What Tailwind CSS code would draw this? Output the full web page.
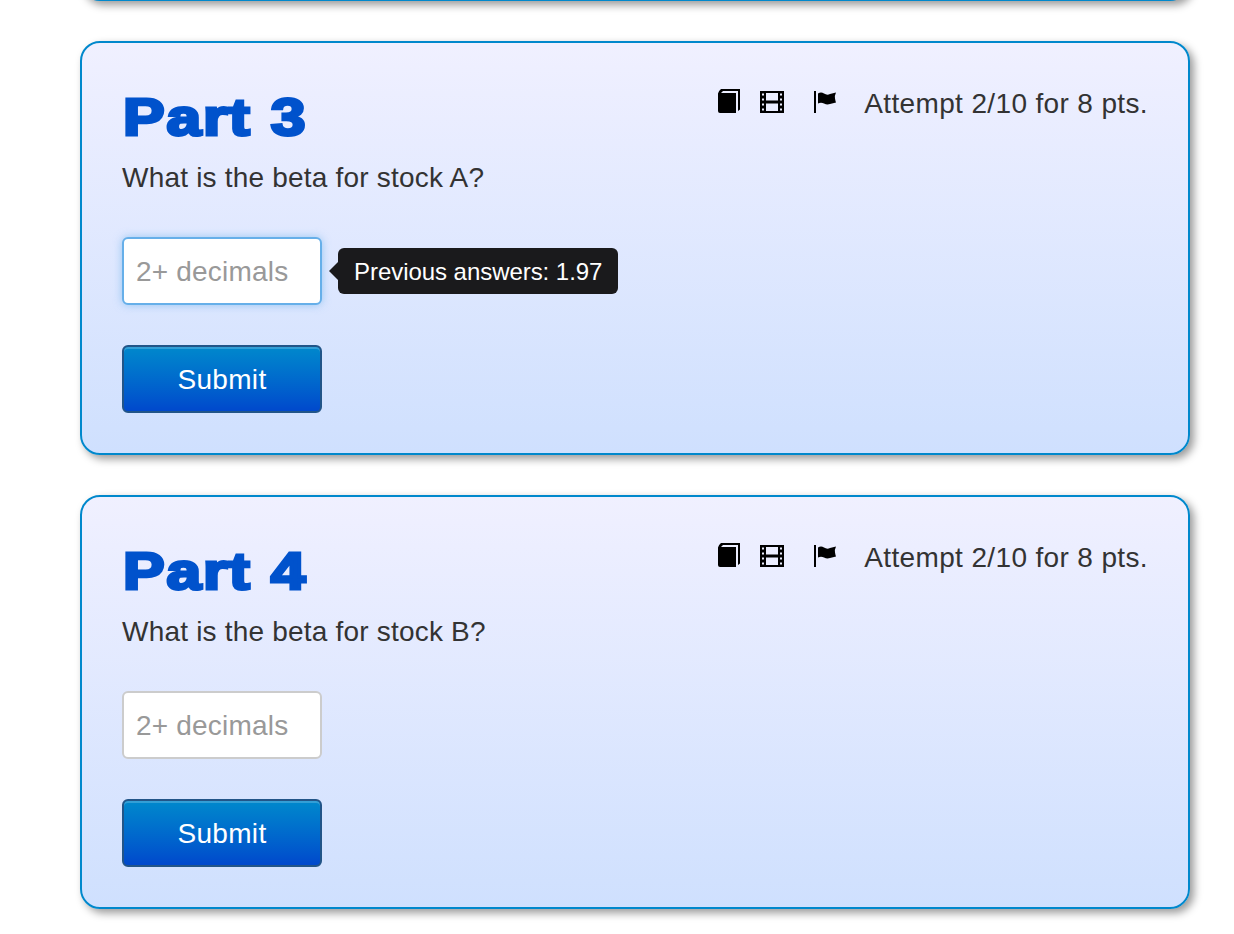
<!DOCTYPE html>
<html><head><meta charset="utf-8">
<script src="https://cdn.jsdelivr.net/npm/@tailwindcss/browser@4"></script>
</head>
<body class="bg-white font-['Liberation_Sans',Arial,sans-serif] text-[#333] overflow-hidden">
<div class="w-[1234px] h-[934px] pl-[80px] pr-[44px] flex flex-col overflow-hidden">
  <div class="h-[40px] -mt-[39px] shrink-0 rounded-[20px] border-2 border-[#0088cc] bg-[#cfe0fe] shadow-[4px_4px_8px_rgba(0,0,0,0.4)]"></div>

  <section class="mt-[40px] h-[414px] shrink-0 rounded-[20px] border-2 border-[#0088cc] bg-linear-to-b from-[#f0f0ff] to-[#cfe0fe] shadow-[4px_4px_8px_rgba(0,0,0,0.4)] px-[40px] pt-[40px] flex flex-col">
    <div class="flex justify-between items-start h-[64px]">
      <h2 class="ml-[1px] origin-left scale-x-[1.2] text-[52px] leading-[68px] font-bold text-[#0052cc] tracking-[1.5px] [-webkit-text-stroke:3px_#0052cc]">Part 3</h2>
      <div class="flex items-center mt-[5px] h-[32px]">
        <svg class="w-[22px] h-[24px] mb-[6px]" viewBox="0 0 22 24"><path fill="#000" d="M0 4.500Q0 2.500 3 0H22V20.500L20 22V2H5L3 4H18V24H2Q0 24 0 22Z"/></svg>
        <svg class="w-[24px] h-[22px] ml-[20px] mb-[4px]" viewBox="0 0 24 22"><path fill="#000" fill-rule="evenodd" d="M0 0h24v22H0zM2 2.500v2h2v-2zM2 7.500v2h2v-2zM2 12.500v2h2v-2zM2 17.500v2h2v-2zM20 2.500v2h2v-2zM20 7.500v2h2v-2zM20 12.500v2h2v-2zM20 17.500v2h2v-2zM6 2v7.500h12V2zM6 12.500V20h12v-7.500z"/></svg>
        <svg class="w-[22px] h-[22px] ml-[30px] mb-[4px]" viewBox="0 0 22 22"><path fill="#000" d="M0 0h2v22H0zM4 2.500q3-2 6 0t6 .5q3-1 6-1.500-1.500 3-1 6t1 4q-3 .5-6 1.500t-6-.5-6 0z"/></svg>
        <span class="ml-[28px] text-[28px] leading-[32px] tracking-[0.36px]">Attempt 2/10 for 8 pts.</span>
      </div>
    </div>
    <p class="mt-[11px] text-[28px] leading-[40px] tracking-[0.2px]">What is the beta for stock A?</p>
    <div class="mt-[39px] flex items-center">
      <input placeholder="2+ decimals" class="w-[200px] h-[68px] rounded-[6px] bg-white border-2 border-[#66afe9] px-[12px] pt-[2px] text-[28px] tracking-[0.2px] placeholder:text-[#999] shadow-[0_0_8px_rgba(102,175,233,0.6)] outline-none">
      <div class="relative ml-[16px] h-[46px] rounded-[6px] bg-[#1a1a1c] px-[16px] pt-[1px] flex items-center text-white text-[24px] leading-[30px] tracking-[-0.05px]">
        <span class="absolute left-[-9px] top-[14px] w-0 h-0 border-y-[9px] border-y-transparent border-r-[9px] border-r-[#1a1a1c]"></span>
        Previous answers: 1.97
      </div>
    </div>
    <button class="mt-[40px] w-[200px] h-[68px] rounded-[6px] border-2 border-[#225588] pt-[2px] bg-linear-to-b from-[#0088cc] to-[#0048cc] text-white text-[28px] tracking-[0.3px] shadow-[inset_0_2px_0_rgba(255,255,255,0.2)]">Submit</button>
  </section>

  <section class="mt-[40px] h-[414px] shrink-0 rounded-[20px] border-2 border-[#0088cc] bg-linear-to-b from-[#f0f0ff] to-[#cfe0fe] shadow-[4px_4px_8px_rgba(0,0,0,0.4)] px-[40px] pt-[40px] flex flex-col">
    <div class="flex justify-between items-start h-[64px]">
      <h2 class="ml-[1px] origin-left scale-x-[1.2] text-[52px] leading-[68px] font-bold text-[#0052cc] tracking-[1.5px] [-webkit-text-stroke:3px_#0052cc]">Part 4</h2>
      <div class="flex items-center mt-[5px] h-[32px]">
        <svg class="w-[22px] h-[24px] mb-[6px]" viewBox="0 0 22 24"><path fill="#000" d="M0 4.500Q0 2.500 3 0H22V20.500L20 22V2H5L3 4H18V24H2Q0 24 0 22Z"/></svg>
        <svg class="w-[24px] h-[22px] ml-[20px] mb-[4px]" viewBox="0 0 24 22"><path fill="#000" fill-rule="evenodd" d="M0 0h24v22H0zM2 2.500v2h2v-2zM2 7.500v2h2v-2zM2 12.500v2h2v-2zM2 17.500v2h2v-2zM20 2.500v2h2v-2zM20 7.500v2h2v-2zM20 12.500v2h2v-2zM20 17.500v2h2v-2zM6 2v7.500h12V2zM6 12.500V20h12v-7.500z"/></svg>
        <svg class="w-[22px] h-[22px] ml-[30px] mb-[4px]" viewBox="0 0 22 22"><path fill="#000" d="M0 0h2v22H0zM4 2.500q3-2 6 0t6 .5q3-1 6-1.500-1.500 3-1 6t1 4q-3 .5-6 1.500t-6-.5-6 0z"/></svg>
        <span class="ml-[28px] text-[28px] leading-[32px] tracking-[0.36px]">Attempt 2/10 for 8 pts.</span>
      </div>
    </div>
    <p class="mt-[11px] text-[28px] leading-[40px] tracking-[0.2px]">What is the beta for stock B?</p>
    <div class="mt-[39px] flex items-center">
      <input placeholder="2+ decimals" class="w-[200px] h-[68px] rounded-[6px] bg-white border-2 border-[#ccc] px-[12px] pt-[2px] text-[28px] tracking-[0.2px] placeholder:text-[#999] outline-none">
    </div>
    <button class="mt-[40px] w-[200px] h-[68px] rounded-[6px] border-2 border-[#225588] pt-[2px] bg-linear-to-b from-[#0088cc] to-[#0048cc] text-white text-[28px] tracking-[0.3px] shadow-[inset_0_2px_0_rgba(255,255,255,0.2)]">Submit</button>
  </section>
</div>
</body></html>
